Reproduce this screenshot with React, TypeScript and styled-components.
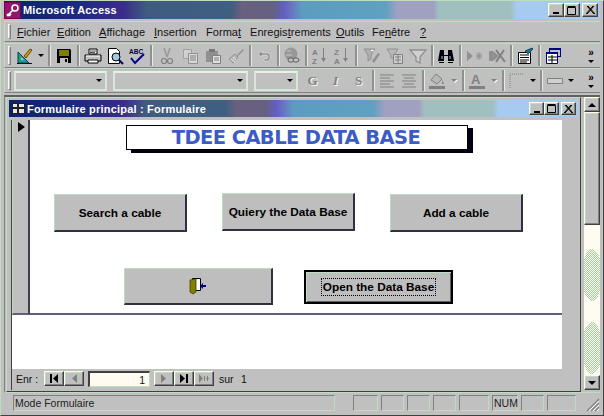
import React from "react";
import styled, { createGlobalStyle, css } from "styled-components";

const Global = createGlobalStyle`
  html, body { margin: 0; padding: 0; background: #c0c0c0; }
  #root { width: 604px; height: 416px; overflow: hidden; }
  * { box-sizing: border-box; }
`;
const UI = `"Liberation Sans", Arial, sans-serif`;
const HI = "#c0dcc0";
const raised = css`
  border-style: solid; border-width: 1px;
  border-color: #fffbf0 #404040 #404040 #fffbf0;
  box-shadow: inset -1px -1px 0 #808080, inset 1px 1px 0 ${HI};
`;
const Win = styled.div`
  width: 604px; height: 416px; background: #c0c0c0; display: flex; flex-direction: column;
  border: 1px solid ${HI}; border-right-color: #404040; border-bottom-color: #404040; padding: 0 3px 3px 3px; font: 11px ${UI}; color: #000;
`;
const Title = styled.div<{ $h: number; $fs: number }>`
  height: ${p => p.$h}px; flex: none; display: flex; align-items: center; color: #fff; font-weight: 700; font-size: ${p => p.$fs}px;
  white-space: nowrap; padding-right: 2px; gap: 2px;
  background: linear-gradient(90deg, #0a2468 0, #1c2a80 12%, #3a2c88 20%, #3f5c80 24%, #3f5f80 38%, #6a6080 40%, #666080 45%, #6260c0 47%, #6a70c0 48%, #5c9cc0 50%, #60a0c0 64%, #a0a0c0 66%, #a0a0c0 72%, #a0c0c0 73%, #a0c0c0 85%, #a6caf0 86%, #a6caf0 100%);
`;
const TitleText = styled.span` flex: 1; letter-spacing: .2px; `;
const CtlGroup = styled.div` display: flex; align-items: center; `;
const CtlBtn = styled.div<{ $gap?: number; $size: number }>`
  ${raised}; background: #c0c0c0; width: ${p => p.$size}px; height: ${p => p.$size - 2}px; margin-left: ${p => p.$gap ?? 0}px;
  display: flex; align-items: center; justify-content: center; flex: none;
`;
const Bar = styled.div<{ $h: number; $mt?: number }>`
  height: ${p => p.$h}px; margin-top: ${p => p.$mt ?? 0}px; flex: none; display: flex; align-items: center; padding-left: 3px;
  border-top: 1px solid ${HI}; border-bottom: 1px solid #808080; border-left: 1px solid ${HI};
`;
const Grip = styled.div`
  width: 3px; height: calc(100% - 4px); flex: none; margin-right: 3px;
  border: 1px solid; border-color: #fffbf0 #808080 #808080 #fffbf0; background: #c0c0c0;
`;
const Menu = styled.div<{ $w: number }>` width: ${p => p.$w}px; flex: none; font-size: 11px; color: #111; letter-spacing: .05px; white-space: nowrap; `;
const Slot = styled.div<{ $w?: number }>`
  width: ${p => p.$w ?? 22}px; height: 20px; flex: none; display: flex; align-items: center; justify-content: center;
`;
const Sep = styled.div<{ $w?: number }>`
  width: ${p => p.$w ?? 6}px; height: calc(100% - 2px); flex: none;
  &::after { content: ""; display: block; width: 2px; height: 100%; margin: 0 auto; background: #909090; border-right: 1px solid #e0f0e0; }
`;
const Arrow = styled.span<{ $off?: boolean }>`
  display: block; width: 0; height: 0; border: 3px solid transparent; border-top: 3px solid ${p => p.$off ? "#808080" : "#000"}; border-bottom: 0;
  ${p => p.$off && "filter: drop-shadow(1px 1px 0 #fffbf0);"}
`;
const Chevron = styled.div`
  margin-left: auto; width: 14px; margin-right: 2px; display: flex; flex-direction: column; align-items: center; font: 700 10px/9px ${UI}; gap: 3px;
`;
const Combo = styled.div<{ $w: number; $mr?: number }>`
  width: ${p => p.$w}px; height: 20px; flex: none; margin-right: ${p => p.$mr ?? 6}px; background: #c0c0c0; display: flex; align-items: center; justify-content: flex-end; padding-right: 3px;
  border: 2px solid #d8e8d8; border-top-color: #e8f0e8;
`;
const Glyph = styled.span<{ $i?: boolean }>`
  font: 700 13px "Liberation Serif", serif; font-style: ${p => p.$i ? "italic" : "normal"}; color: #808080; text-shadow: 1px 1px 0 #fffbf0;
`;
const Client = styled.div`
  flex: 1; min-height: 0; display: flex; margin-top: 2px; border-top: 2px solid #606060; border-left: 1px solid #808080; padding: 0 0 0 1px; gap: 3px;
  border-bottom: 1px solid ${HI};
`;
const Child = styled.div`
  flex: 1; min-width: 0; display: flex; flex-direction: column; background: #c0c0c0; padding: 2px 2px 1px 2px;
  border: 1px solid; border-color: ${HI} #404040 #404040 ${HI};
`;
const ChildBody = styled.div` flex: 1; min-height: 0; display: flex; flex-direction: column; margin: 3px 0 0 2px; border-left: 1px solid #404040; `;
const Upper = styled.div` height: 195px; flex: none; display: flex; `;
const RecSel = styled.div`
  width: 18px; flex: none; background: #c0c0c0; border-right: 2px solid #404050; border-left: 1px solid ${HI}; border-bottom: 2px solid #606078; padding: 2px 0 0 5px;
`;
const Triangle = styled.div` width: 0; height: 0; border: 5px solid transparent; border-left: 7px solid #000; border-right: 0; `;
const Detail = styled.div` flex: 1; background: #fff; display: flex; flex-direction: column; align-items: flex-start; padding: 5px 0 0 0; border-bottom: 2px solid #606078; `;
const Side = styled.div` width: 16px; flex: none; background: #c0c0c0; `;
const Banner = styled.div`
  align-self: flex-start; margin-left: 96px; width: 342px; height: 25px; background: #fff; border: 1px solid #000; box-shadow: 5px 3px 0 #000010;
  font: 700 19.5px "DejaVu Sans", sans-serif; color: #3c5cc4; display: flex; align-items: center; justify-content: center; letter-spacing: -.6px; padding-right: 2px;
`;
const BtnRow = styled.div<{ $mt: number; $ml: number; $gap: number }>`
  display: flex; align-items: flex-start; margin-top: ${p => p.$mt}px; margin-left: ${p => p.$ml}px; gap: ${p => p.$gap}px;
`;
const FormBtn = styled.div<{ $w: number; $h: number; $drop?: number }>`
  width: ${p => p.$w}px; height: ${p => p.$h}px; margin-top: ${p => p.$drop ?? 0}px; background: #bebebe; flex: none;
  display: flex; align-items: center; justify-content: center; font: 700 11.8px ${UI}; color: #000;
  border: 1px solid; border-color: ${HI} #303040 #303040 ${HI}; border-width: 1px 2px 2px 1px;
`;
const DefaultBtn = styled(FormBtn)`
  border: 2px solid #000; border-right-width: 2px; box-shadow: inset 1px 1px 0 ${HI}, inset -1px -1px 0 #606060;
`;
const Focus = styled.span` outline: 1px dotted #000; padding: 1px 1px; `;
const Lower = styled.div` flex: 1; display: flex; min-height: 0; `;
const Blank = styled.div` flex: 1; background: #fff; `;
const Nav = styled.div`
  height: 21px; flex: none; display: flex; align-items: center; padding-left: 4px; color: #111; font-size: 10.5px; background: #c0c0c0; padding-bottom: 2px;
`;
const NavLabel = styled.span<{ $w: number }>` width: ${p => p.$w}px; flex: none; white-space: nowrap; `;
const NavBtn = styled.div<{ $off?: boolean }>`
  ${raised}; width: 20px; height: 15px; flex: none; display: flex; align-items: center; justify-content: center; background: #c0c0c0;
`;
const NavInput = styled.div`
  width: 62px; height: 16px; flex: none; margin: 0 4px; background: #fffbf0; text-align: right; padding: 1px 4px 0 0; font-size: 10.5px;
  border: 1px solid; border-width: 2px 1px 1px 2px; border-color: #404040 ${HI} ${HI} #404040;
`;
const NavGap = styled.div` width: 5px; flex: none; `;
const VScroll = styled.div`
  width: 16px; flex: none; display: flex; flex-direction: column; margin-bottom: 2px; background-color: #fffbf0;
  background-image:
    repeating-conic-gradient(#fffbf0 0 25%, transparent 0 50%),
    radial-gradient(ellipse 10px 26px at 50% 178px, #a0d0a0 0 100%, transparent 100%),
    radial-gradient(ellipse 10px 26px at 50% 251px, #a0d0a0 0 100%, transparent 100%);
  background-size: 2px 2px, auto, auto;
  background-repeat: repeat, no-repeat, no-repeat;
`;
const SBtn = styled.div` ${raised}; height: 15px; flex: none; background: #c0c0c0; display: flex; align-items: center; justify-content: center; `;
const Thumb = styled.div` ${raised}; height: 113px; flex: none; background: #c0c0c0; `;
const Track = styled.div` flex: 1; `;
const UpArrow = styled.span` display: block; width: 0; height: 0; border: 4px solid transparent; border-bottom: 4px solid #000; border-top: 0; `;
const DownArrow = styled.span` display: block; width: 0; height: 0; border: 4px solid transparent; border-top: 4px solid #000; border-bottom: 0; `;
const Status = styled.div` height: 19px; flex: none; display: flex; align-items: center; padding: 1px 0 0 9px; gap: 3px; `;
const Panel = styled.div<{ $w: number; $ml?: number }>`
  width: ${p => p.$w}px; height: 16px; flex: none; margin-left: ${p => p.$ml ?? 0}px; font-size: 10.5px; color: #222; white-space: nowrap; line-height: 14px; padding-left: 1px;
  border: 1px solid; border-color: #808080 ${HI} ${HI} #808080;
`;
const GripCorner = styled.svg` margin-left: auto; flex: none; align-self: flex-end; `;

const Min = () => <svg width="8" height="8"><rect x="1" y="6" width="6" height="2" fill="#000" /></svg>;
const Max = () => <svg width="10" height="9"><path d="M.5 1.500h8v7h-8zM.5.5h8" fill="none" stroke="#000" /></svg>;
const Close = () => <svg width="9" height="8"><path d="M1 0l7 8M8 0L1 8M2 0l7 8M7 0L0 8" stroke="#000" fill="none" /></svg>;

const Controls = ({ size }: { size: number }) => (
  <CtlGroup>
    <CtlBtn $size={size}><Min /></CtlBtn>
    <CtlBtn $size={size}><Max /></CtlBtn>
    <CtlBtn $size={size} $gap={2}><Close /></CtlBtn>
  </CtlGroup>
);

const AccessIcon = () => (
  <svg width="17" height="17" viewBox="0 0 17 17">
    <rect width="17" height="17" fill="#800050" /><rect x="1" y="1" width="15" height="15" fill="#901868" />
    <path d="M3 14l6-6M5 14l2-2M3 12l2 2" stroke="#fff" strokeWidth="1.6" fill="none" />
    <circle cx="11" cy="6" r="3" fill="none" stroke="#fff" strokeWidth="1.6" />
  </svg>
);
const FormIcon = () => (
  <svg width="13" height="11" viewBox="0 0 13 11" style={{ marginLeft: 3 }}>
    <rect width="13" height="11" fill="#202020" /><path d="M1 1h4v3H1zM7 1h5v3H7zM1 6h4v4H1zM7 6h5v4H7z" fill="#e8e8e8" />
  </svg>
);
const I = ({ children }: { children: React.ReactNode }) => <svg width="18" height="18" viewBox="0 0 18 18">{children}</svg>;
const off = { fill: "#808080" } as const;
const Design = () => <I><path d="M2 16V5l11 11z" fill="#20a090" stroke="#004040" /><path d="M5 13V10l3 3z" fill="#c0c0c0" /><path d="M8 9l6-7 2 1-6 8z" fill="#c8a000" stroke="#402000" strokeWidth=".7" /><path d="M1 16.500h15" stroke="#000060" /></I>;
const Save = () => <I><path d="M2 2h13l1 1v13H2z" fill="#000" /><path d="M4 3h10v6H4z" fill="#808000" /><path d="M5 11h8v5H5z" fill="#c0c0c0" /><path d="M10 12h2v3h-2z" fill="#000" /></I>;
const Print = () => <I><path d="M5 2h8v5H5z" fill="#fff" stroke="#000" /><path d="M1 8h16v6H1z" fill="#c0c0c0" stroke="#000" /><path d="M4 13h10v3H4z" fill="#fff" stroke="#000" /><path d="M2 9h14" stroke="#fff" /><path d="M6 4h6M6 5.500h5" stroke="#000" strokeWidth=".7" /></I>;
const Preview = () => <I><path d="M2.500 1.500h8l3 3v12h-11z" fill="#fff" stroke="#000" /><circle cx="10" cy="10" r="4" fill="#a0c8e0" stroke="#000" /><path d="M13 13l4 4" stroke="#000060" strokeWidth="2" /></I>;
const Spell = () => <I><text x="1" y="7" fontFamily="Liberation Sans" fontSize="6.5" fontWeight="700" fill="#000040">ABC</text><path d="M3 11l4 5 9-9" fill="none" stroke="#000090" strokeWidth="2" /></I>;
const Cut = () => <I><path d="M6 1l3 9M12 1L9 10" stroke="#989898" strokeWidth="1.5" /><circle cx="6" cy="14" r="2.500" fill="none" stroke="#808080" strokeWidth="1.2" /><circle cx="12" cy="14" r="2.500" fill="none" stroke="#808080" strokeWidth="1.2" /></I>;
const Copy = () => <I><path d="M2.500 2.500h8v9h-8z" fill="#d0d0d0" stroke="#a0a0a0" /><path d="M7.500 6.500h9v10h-9z" fill="#d8d8d8" stroke="#909090" /><path d="M9 9h6M9 11h6M9 13h6" stroke="#808080" /></I>;
const Paste = () => <I><path d="M2 4h12v11H2z" fill="#909090" /><path d="M5 2h6v3H5z" fill="#787878" /><path d="M8.500 8.500h8v8h-8z" fill="#e0e0e0" stroke="#808080" /><path d="M10 11h5M10 13h5" stroke="#808080" /></I>;
const Brush = () => <I><path d="M10 8l6-6 1 1-6 6z" fill="#909090" /><path d="M2 12l6-5 3 3-5 6z" fill="#b8b8b8" stroke="#909090" /><path d="M4 12l4 3M6 10l3 3" stroke="#e8e8e8" /></I>;
const Undo = () => <I><path d="M3 7l4-3v2h6l2 2v4l-2 2H9v-2h3l1-1V9l-1-1H7v2z" fill="#909090" stroke="#fffbf0" strokeWidth=".4" /></I>;
const Link = () => <I><circle cx="8" cy="7" r="6.500" fill="#989898" /><path d="M4 4h4M3 8h6" stroke="#c8c8c8" /><rect x="5" y="11" width="6" height="4" rx="2" fill="#c0c0c0" stroke="#606060" /><rect x="10" y="11" width="6" height="4" rx="2" fill="#c0c0c0" stroke="#606060" /></I>;
const Sort = ({ a, b }: { a: string; b: string }) => <I><text x="1" y="8" fontFamily="Liberation Sans" fontSize="8" fontWeight="700" fill="#808080">{a}</text><text x="1" y="16.500" fontFamily="Liberation Sans" fontSize="8" fontWeight="700" fill="#808080">{b}</text><path d="M12 1h1v11h-1z" {...off} /><path d="M10 11h5l-2.500 4z" {...off} /></I>;
const FilterA = () => <I><path d="M1 2h11L8 8v4L5 14V8z" fill="#b0b0b0" stroke="#909090" /><path d="M9 14l6-8 2 1-6 9z" fill="#909090" /><path d="M8 3l3 1" stroke="#fff" /></I>;
const FilterB = () => <I><path d="M1 2h11L8 8v3H5V8z" fill="#b8b8b8" stroke="#909090" /><path d="M7.500 7.500h9v9h-9z" fill="#d0d0d0" stroke="#808080" /><path d="M9 10h6M9 13h6M12 8v8" stroke="#808080" /></I>;
const FilterC = () => <I><path d="M1 3h16l-6 7v6l-4-2v-4z" fill="#d0d0d0" stroke="#909090" strokeWidth="1.3" /></I>;
const Binoc = () => <I><path d="M3 3h4v5h4V3h4l2 11h-6V9H7v5H1z" fill="#000" /><path d="M2 15h5v1H2zM11 15h5v1h-5z" fill="#000" /><path d="M4 9h2v3H4zM12 9h2v3h-2z" fill="#4060a0" /></I>;
const NewRec = () => <I><path d="M1 4l6 5-6 5z" fill="#909090" /><path d="M13 5v8M9.500 9h7M10.500 6l5 6M15.500 6l-5 6" stroke="#909090" /></I>;
const DelRec = () => <I><path d="M1 4h4l6 5-6 5H1z" fill="#909090" /><path d="M8 3l9 12M16 3L8 15" stroke="#808080" strokeWidth="2" /></I>;
const Props = () => <I><path d="M2.500 5.500h12v11h-12z" fill="#fff" stroke="#000" /><path d="M4 8h9M4 10.500h9M4 13h9M4 15h7" stroke="#000" /><path d="M9 4l7-3 1 1-5 5z" fill="#008080" stroke="#000040" strokeWidth=".6" /></I>;
const DbWin = () => <I><path d="M4 1h12v9H4z" fill="#000080" /><path d="M5 3h10v6H5z" fill="#c0c0c0" /><path d="M1.500 5.500h11v11h-11z" fill="#fff" stroke="#000080" /><path d="M1 5h12v2H1z" fill="#000080" /><path d="M3 10h9M3 13h9M7 8v8" stroke="#000" /></I>;
const Fill = () => <I><path d="M3 8l5-6 6 5-5 5z" fill="#b8b8b8" stroke="#808080" /><path d="M14 8l2 4-2 0z" {...off} /><path d="M1 14h16v3H1z" {...off} /></I>;
const FontA = () => <I><text x="3" y="12" fontFamily="Liberation Sans" fontSize="13" fontWeight="700" fill="#808080">A</text><path d="M1 14h16v3H1z" {...off} /></I>;
const Border = () => <I><path d="M2 16V2h14" fill="none" stroke="#808080" strokeDasharray="1 1" /></I>;
const RectLine = () => <I><path d="M1.500 6.500h15v5h-15z" fill="#d0d0d0" stroke="#808080" /></I>;
const AlignL = () => <I><path d="M2 3h14M2 6h10M2 9h14M2 12h10M2 15h14" stroke="#808080" /></I>;
const AlignC = () => <I><path d="M2 3h14M4 6h10M2 9h14M4 12h10M2 15h14" stroke="#808080" /></I>;

const Door = () => (
  <svg width="18" height="18" viewBox="0 0 18 18">
    <path d="M3.500 1.500h8v12h-8z" fill="#fff" stroke="#000" />
    <path d="M1 3l6-1v13l-3 2-3-2z" fill="#808000" stroke="#404000" strokeWidth=".8" />
    <path d="M11 9l3-3v2h3v2h-3v2z" fill="#000080" />
  </svg>
);
const NP = ({ d, gray }: { d: string; gray?: boolean }) => <svg width="10" height="9" viewBox="0 0 10 9"><path d={d} fill={gray ? "#808080" : "#000"} /></svg>;

const menus: [string, string, string, number][] = [
  ["", "F", "ichier", 40], ["", "E", "dition", 42], ["", "A", "ffichage", 55], ["", "I", "nsertion", 52], ["Forma", "t", "", 44],
  ["Enregis", "t", "rements", 86], ["", "O", "utils", 36], ["Fe", "n", "être", 48], ["", "?", "", 8],
];

export default function App() {
  return (
    <Win>
      <Global />
      <Title $h={18} $fs={11}>
        <AccessIcon />
        <TitleText>Microsoft Access</TitleText>
        <Controls size={16} />
      </Title>
      <Bar $h={21} $mt={2}>
        <Grip />
        <Slot $w={3} />
        {menus.map(([a, u, b, w]) => <Menu key={a + u + b} $w={w}>{a}<u>{u}</u>{b}</Menu>)}
      </Bar>
      <Bar $h={25} $mt={1}>
        <Grip />
        <Slot><Design /></Slot><Slot $w={10}><Arrow /></Slot><Sep $w={7} />
        <Slot><Save /></Slot><Sep $w={7} />
        <Slot><Print /></Slot><Slot><Preview /></Slot><Slot><Spell /></Slot><Sep $w={7} />
        <Slot $w={23}><Cut /></Slot><Slot $w={23}><Copy /></Slot><Slot $w={23}><Paste /></Slot><Slot $w={23}><Brush /></Slot><Sep />
        <Slot><Undo /></Slot><Sep /><Slot><Link /></Slot><Sep />
        <Slot><Sort a="A" b="Z" /></Slot><Slot><Sort a="Z" b="A" /></Slot><Sep $w={7} />
        <Slot $w={23}><FilterA /></Slot><Slot $w={23}><FilterB /></Slot><Slot $w={23}><FilterC /></Slot><Sep />
        <Slot><Binoc /></Slot><Sep $w={7} />
        <Slot><NewRec /></Slot><Slot><DelRec /></Slot><Sep />
        <Slot><Props /></Slot><Sep $w={7} /><Slot><DbWin /></Slot>
        <Chevron>»<Arrow /></Chevron>
      </Bar>
      <Bar $h={25}>
        <Grip />
        <Combo $w={93}><Arrow /></Combo>
        <Combo $w={135}><Arrow /></Combo>
        <Combo $w={44} $mr={3}><Arrow /></Combo>
        <Slot $w={23}><Glyph>G</Glyph></Slot><Slot $w={23}><Glyph $i>I</Glyph></Slot><Slot $w={23}><Glyph>S</Glyph></Slot><Sep />
        <Slot><AlignL /></Slot><Slot><AlignC /></Slot><Sep />
        <Slot><Fill /></Slot><Slot $w={12}><Arrow $off /></Slot><Sep />
        <Slot><FontA /></Slot><Slot $w={12}><Arrow $off /></Slot><Sep />
        <Slot><Border /></Slot><Slot $w={10}><Arrow /></Slot><Sep />
        <Slot><RectLine /></Slot><Slot $w={10}><Arrow /></Slot>
        <Chevron>»<Arrow /></Chevron>
      </Bar>
      <Client>
        <Child>
          <Title $h={17} $fs={11}>
            <FormIcon />
            <TitleText>Formulaire principal : Formulaire</TitleText>
            <Controls size={15} />
          </Title>
          <ChildBody>
            <Upper>
              <RecSel><Triangle /></RecSel>
              <Detail>
                <Banner>TDEE CABLE DATA BASE</Banner>
                <BtnRow $mt={43} $ml={24} $gap={35}>
                  <FormBtn $w={133} $h={38} $drop={1}>Search a cable</FormBtn>
                  <FormBtn $w={133} $h={38}>Quiery the Data Base</FormBtn>
                  <FormBtn $w={133} $h={38} $drop={1}>Add a cable</FormBtn>
                </BtnRow>
                <BtnRow $mt={36} $ml={94} $gap={31}>
                  <FormBtn $w={149} $h={37}><Door /></FormBtn>
                  <DefaultBtn $w={149} $h={34} $drop={2}><Focus>Open the Data Base</Focus></DefaultBtn>
                </BtnRow>
              </Detail>
              <Side />
            </Upper>
            <Lower><Blank /><Side /></Lower>
            <Nav>
              <NavLabel $w={28}>Enr :</NavLabel>
              <NavBtn><NP d="M1 0h2v9H1zM9 0v9L4 4.500z" /></NavBtn>
              <NavBtn $off><NP gray d="M8 0v9L3 4.500z" /></NavBtn>
              <NavInput>1</NavInput>
              <NavBtn $off><NP gray d="M2 0v9l5-4.500z" /></NavBtn>
              <NavBtn><NP d="M1 0v9l5-4.500zM7 0h2v9H7z" /></NavBtn>
              <NavBtn $off><NP gray d="M0 0v9l4-4.500zM5 2h1v5H5zM7 4h3v1H7zM8 2h1v5H8z" /></NavBtn>
              <NavGap />
              <NavLabel $w={22}>sur</NavLabel>
              <NavLabel $w={10}>1</NavLabel>
            </Nav>
          </ChildBody>
        </Child>
        <VScroll>
          <SBtn><UpArrow /></SBtn>
          <Thumb />
          <Track />
          <SBtn><DownArrow /></SBtn>
        </VScroll>
      </Client>
      <Status>
        <Panel $w={322}>Mode Formulaire</Panel>
        <Panel $w={25} $ml={15} />
        <Panel $w={23} />
        <Panel $w={23} />
        <Panel $w={23} />
        <Panel $w={30} />
        <Panel $w={26}>NUM</Panel>
        <Panel $w={23} />
        <Panel $w={29} />
        <GripCorner width="14" height="14" viewBox="0 0 14 14"><path d="M13 1L1 13M13 5L5 13M13 9L9 13" stroke="#808080" strokeWidth="1.2" /><path d="M13 3L3 13M13 7L7 13M13 11L11 13" stroke="#fffbf0" strokeWidth="1" /></GripCorner>
      </Status>
    </Win>
  );
}
